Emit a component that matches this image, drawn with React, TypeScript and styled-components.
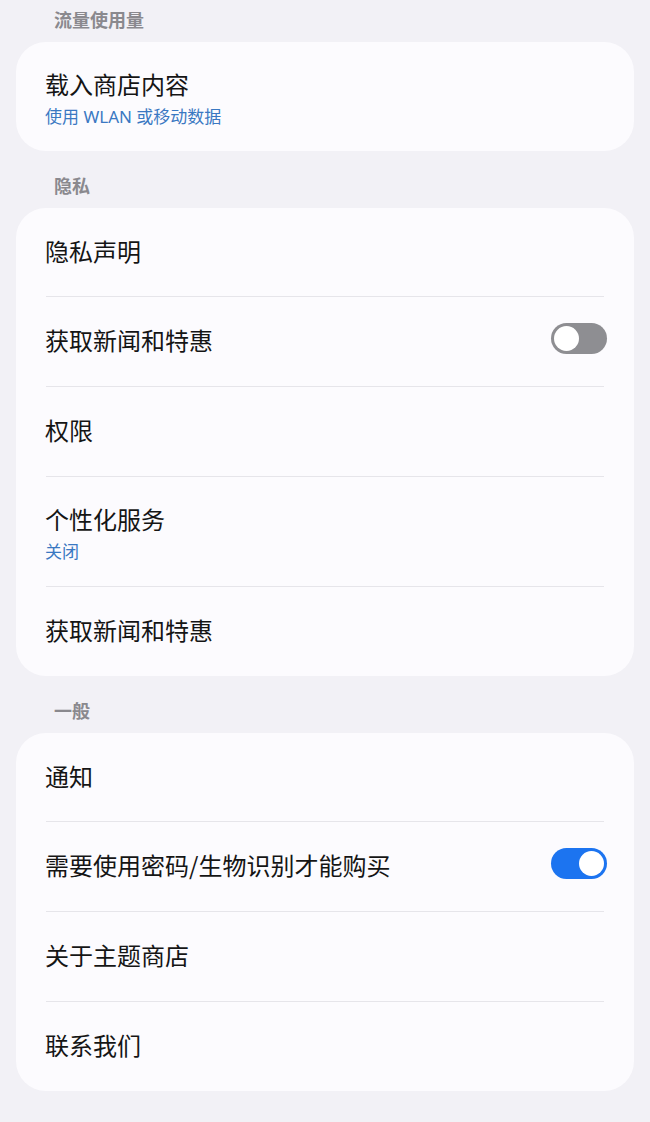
import styled, { createGlobalStyle } from "styled-components";

const GlobalStyle = createGlobalStyle`
  body {
    margin: 0;
    background-color: #f2f1f6;
    font-family: "Noto Sans CJK SC", "Noto Sans", sans-serif;
  }
`;

const Page = styled.div`
  width: 650px;
  min-height: 1122px;
  padding: 7px 16px 0;
  box-sizing: border-box;
  background-color: #f2f1f6;
`;

const SectionTitle = styled.div`
  height: 35px;
  padding-left: 38px;
  font-size: 18px;
  font-weight: bold;
  line-height: 25px;
  color: #8a898e;
`;

const Card = styled.div`
  background-color: #fcfbfe;
  border-radius: 30px;
  margin-bottom: 22px;
  padding: 0 30px;
`;

const Row = styled.div<{ $tall?: boolean }>`
  box-sizing: border-box;
  height: ${(p) => (p.$tall ? "109px" : "88px")};
  display: flex;
  align-items: center;
  justify-content: space-between;

  &:not(:first-child) {
    border-top: 1px solid #e6e5ea;
    height: ${(p) => (p.$tall ? "110px" : "90px")};
  }
`;

const Texts = styled.div<{ $tall?: boolean }>`
  display: flex;
  flex-direction: column;
  margin-left: -1px;
  padding: ${(p) => (p.$tall ? "4px 0 0" : "0 0 3px")};
`;

const Label = styled.div`
  font-size: 24px;
  line-height: 32px;
  color: #151515;
`;

const Sub = styled.div`
  font-family: "Noto Sans", "Noto Sans CJK SC", sans-serif;
  font-size: 17px;
  line-height: 24px;
  color: #3a78c2;
  margin-top: 5px;
`;

const Toggle = styled.div<{ $on?: boolean }>`
  width: 56px;
  height: 31px;
  border-radius: 16px;
  margin-right: -3px;
  margin-bottom: 6px;
  box-sizing: border-box;
  background-color: ${(p) => (p.$on ? "#1c74f0" : "#8e8e92")};
  display: flex;
  align-items: center;
  justify-content: ${(p) => (p.$on ? "flex-end" : "flex-start")};
  padding: 0 3px;

  &::after {
    content: "";
    width: 25px;
    height: 25px;
    border-radius: 50%;
    background-color: #ffffff;
  }
`;

type Item = { label: string; sub?: string; toggle?: "on" | "off" };

const sections: { title: string; items: Item[] }[] = [
  {
    title: "流量使用量",
    items: [{ label: "载入商店内容", sub: "使用 WLAN 或移动数据" }],
  },
  {
    title: "隐私",
    items: [
      { label: "隐私声明" },
      { label: "获取新闻和特惠", toggle: "off" },
      { label: "权限" },
      { label: "个性化服务", sub: "关闭" },
      { label: "获取新闻和特惠" },
    ],
  },
  {
    title: "一般",
    items: [
      { label: "通知" },
      { label: "需要使用密码/生物识别才能购买", toggle: "on" },
      { label: "关于主题商店" },
      { label: "联系我们" },
    ],
  },
];

const App = () => {
  return (
    <>
      <GlobalStyle />
      <Page>
        {sections.map((s) => (
          <div key={s.title}>
            <SectionTitle>{s.title}</SectionTitle>
            <Card>
              {s.items.map((it, i) => (
                <Row key={i} $tall={!!it.sub}>
                  <Texts $tall={!!it.sub}>
                    <Label>{it.label}</Label>
                    {it.sub && <Sub>{it.sub}</Sub>}
                  </Texts>
                  {it.toggle && <Toggle $on={it.toggle === "on"} />}
                </Row>
              ))}
            </Card>
          </div>
        ))}
      </Page>
    </>
  );
};

export default App;
